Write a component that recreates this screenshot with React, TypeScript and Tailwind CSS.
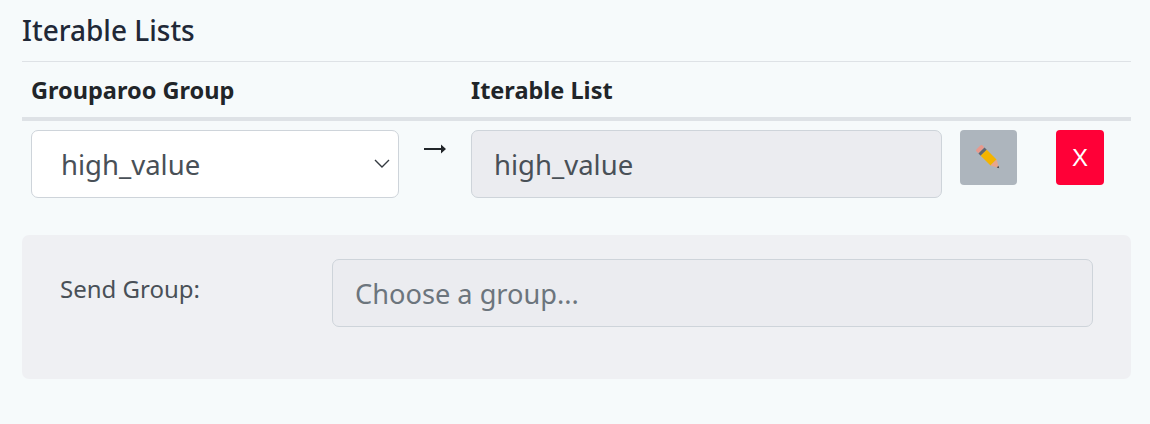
import React from 'react';

const Pencil = () => (
    <svg width="32" height="32" viewBox="0 0 30 30">
        <g transform="rotate(-45 15 15)">
            <rect x="11" y="1" width="8" height="4" rx="1.5" fill="#e8998d" />
            <rect x="11" y="5" width="8" height="3" fill="#5f6670" />
            <rect x="11" y="8" width="8" height="13" fill="#f4b400" />
            <path d="M11 21h8l-4 7.5z" fill="#e8a58c" />
            <path d="M13.9 26.4h2.2L15 28.5z" fill="#3f4650" />
        </g>
    </svg>
);

const Chevron = () => (
    <svg width="20" height="12" viewBox="0 0 20 12" fill="none" stroke="#343a40" strokeWidth="1.4">
        <path d="M3 2l7 7 7-7" />
    </svg>
);

export default function App() {
    return (
        <div className="w-[1150px] h-[424px] overflow-hidden bg-[#f6fafb] pl-[22px] pr-[19px] pt-[12px] font-['Noto_Sans',sans-serif]">
            <h2 className="h-[36px] text-[28px] leading-[36px] font-medium text-[#212837]">Iterable Lists</h2>
            <div className="mt-[13px] h-px bg-[#dee2e6]" />

            <div className="flex h-[59px] items-center border-b-4 border-[#dee2e6] pl-[9px] pt-[2px] text-[23.5px] font-bold text-[#212529]">
                <div className="w-[440px]">Grouparoo Group</div>
                <div>Iterable List</div>
            </div>

            <div className="flex items-start pl-[9px] pt-[9px]">
                <div className="flex h-[68px] w-[368px] items-center justify-between rounded-[7px] border border-[#ced4da] bg-white pl-[29px] pr-[6px] text-[27.5px] text-[#495057]">
                    <span className="pt-[2px]">high_value</span>
                    <Chevron />
                </div>
                <div className="flex w-[72px] justify-center pt-[12px]">
                    <svg width="22" height="14" viewBox="0 0 22 14" fill="#212529">
                        <path d="M0 6h17V2.500L22 7l-5 4.500V8H0z" />
                    </svg>
                </div>
                <div className="flex h-[68px] w-[471px] items-center rounded-[7px] border border-[#ced4da] bg-[#ebecf0] pl-[22px] text-[27.5px] text-[#495057]">
                    <span className="pt-[2px]">high_value</span>
                </div>
                <button className="ml-[18px] flex h-[55px] w-[57px] items-center justify-center rounded-[4px] bg-[#adb5bd]">
                    <Pencil />
                </button>
                <button className="ml-[39px] flex h-[55px] w-[48px] items-center justify-center rounded-[4px] bg-[#ff0037] font-['Liberation_Sans',sans-serif] text-[24px] text-white">
                    X
                </button>
            </div>

            <div className="mt-[37px] flex h-[144px] items-start rounded-[7px] bg-[#eff0f3] pl-[38px] pt-[24px]">
                <div className="w-[272px] pt-[14px] text-[24px] leading-[32px] text-[#495057]">Send Group:</div>
                <div className="flex h-[68px] w-[761px] items-center rounded-[7px] border border-[#ced4da] bg-[#ebecf0] pl-[22px] text-[27.2px] text-[#6c757d]">
                    <span className="pt-[2px]">Choose a group...</span>
                </div>
            </div>
        </div>
    );
}
